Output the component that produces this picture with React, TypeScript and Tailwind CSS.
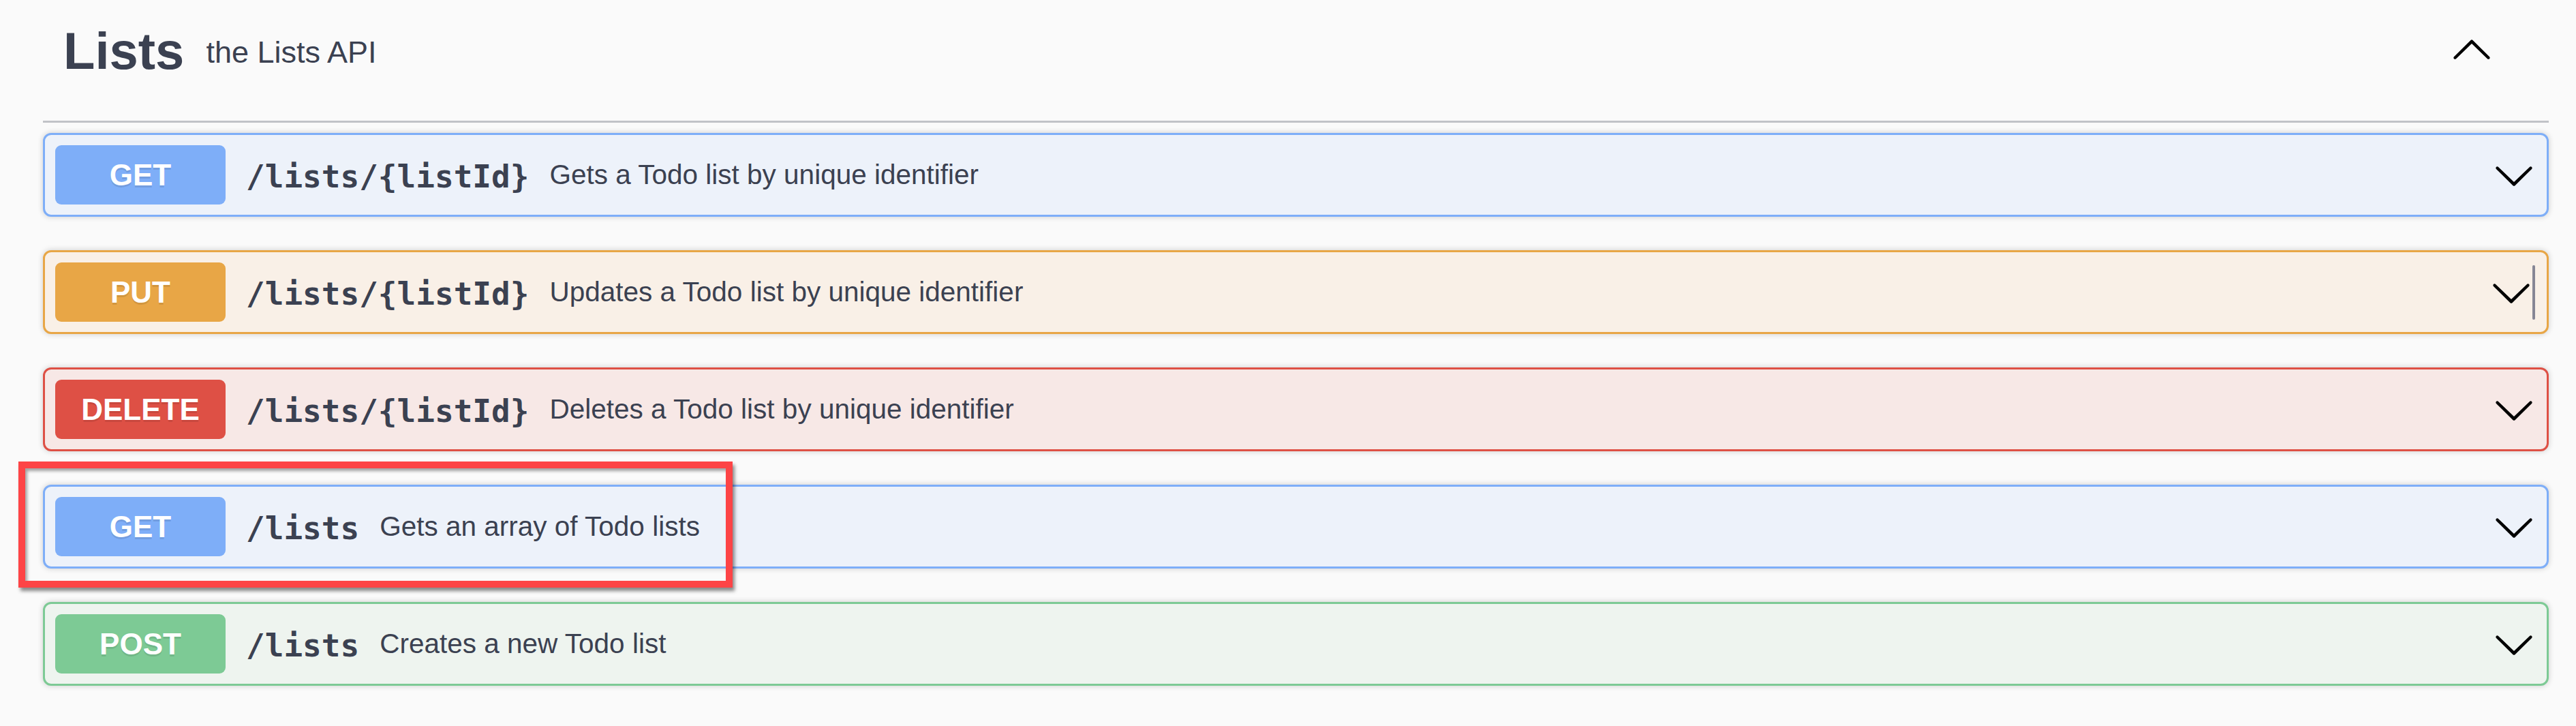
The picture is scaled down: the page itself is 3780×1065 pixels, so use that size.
import React from "react";

type Op = {
  method: string;
  path: string;
  desc: string;
  badge: string;
  bg: string;
  border: string;
  highlight?: boolean;
  cursor?: boolean;
};

const ops: Op[] = [
  { method: "GET", path: "/lists/{listId}", desc: "Gets a Todo list by unique identifier", badge: "bg-[#7eaef8]", bg: "bg-[#edf2fa]", border: "border-[#7eaef8]" },
  { method: "PUT", path: "/lists/{listId}", desc: "Updates a Todo list by unique identifier", badge: "bg-[#e8a646]", bg: "bg-[#f9f0e7]", border: "border-[#e8a646]", cursor: true },
  { method: "DELETE", path: "/lists/{listId}", desc: "Deletes a Todo list by unique identifier", badge: "bg-[#de5045]", bg: "bg-[#f7e8e6]", border: "border-[#de5045]" },
  { method: "GET", path: "/lists", desc: "Gets an array of Todo lists", badge: "bg-[#7eaef8]", bg: "bg-[#edf2fa]", border: "border-[#7eaef8]", highlight: true },
  { method: "POST", path: "/lists", desc: "Creates a new Todo list", badge: "bg-[#7dca95]", bg: "bg-[#eef4ef]", border: "border-[#7dca95]" },
];

function ArrowDown() {
  return (
    <svg width="62" height="62" viewBox="0 0 20 20" className="shrink-0">
      <path
        fill="#000"
        d="M17.418 6.109c.272-.268.709-.268.979 0s.271.701 0 .969l-7.908 7.83c-.27.268-.707.268-.979 0l-7.908-7.83c-.27-.268-.27-.701 0-.969.271-.268.709-.268.979 0L10 13.25l7.418-7.141z"
      />
    </svg>
  );
}

function ArrowUp() {
  return (
    <svg width="62" height="62" viewBox="0 0 20 20" className="shrink-0 mb-[8px]">
      <path
        fill="#000"
        d="M17.418 14.908c.272.268.709.268.979 0s.271-.701 0-.969l-7.908-7.83c-.27-.268-.707-.268-.979 0l-7.908 7.83c-.27.268-.27.701 0 .969.271.268.709.268.979 0L10 7.767l7.418 7.141z"
      />
    </svg>
  );
}

function OpBlock({ op }: { op: Op }) {
  return (
    <div className="relative">
      <div
        className={`flex h-[123px] items-center rounded-[12px] border-[3px] px-[15px] shadow-[0_0_9px_rgba(0,0,0,0.19)] ${op.bg} ${op.border}`}
      >
        <div
          className={`flex h-[87px] w-[250px] shrink-0 items-center justify-center rounded-[9px] font-['Liberation_Sans',Arial,sans-serif] text-[44px] font-bold leading-none text-white [text-shadow:0_3px_0_rgba(0,0,0,0.1)] ${op.badge}`}
        >
          {op.method}
        </div>
        <span className="px-[30px] pt-[4px] font-['DejaVu_Sans_Mono',monospace] text-[46px] font-bold leading-none text-[#3b4151]">
          {op.path}
        </span>
        <span className="font-['Liberation_Sans',Arial,sans-serif] text-[40.5px] leading-none text-[#3b4151]">
          {op.desc}
        </span>
        <div className="ml-auto flex items-center mr-[2px]">
          <ArrowDown />
          {op.cursor && <div className="h-[80px] w-[4px] rounded-full bg-[#868695]" />}
        </div>
      </div>
      {op.highlight && (
        <div className="pointer-events-none absolute left-[-36px] top-[-34px] h-[185px] w-[1048px] border-[10px] border-[#fd4446] shadow-[3px_5px_5px_rgba(0,0,0,0.45),inset_3px_4px_4px_rgba(0,0,0,0.35)]" />
      )}
    </div>
  );
}

export default function App() {
  return (
    <div className="min-h-[1065px] w-full bg-[#fafafa] pl-[63px] pr-[40px]">
      <div className="flex h-[180px] items-center border-b-[3px] border-[#c1c3c7] pb-[27px] pl-[30px]">
        <span className="font-['Liberation_Sans',Arial,sans-serif] text-[76px] font-bold leading-none text-[#3b4151]">
          Lists
        </span>
        <span className="ml-[32px] pt-[3px] font-['Liberation_Sans',Arial,sans-serif] text-[45px] leading-none text-[#3b4151]">
          the Lists API
        </span>
        <div className="ml-auto mr-[82px] flex items-center">
          <ArrowUp />
        </div>
      </div>
      <div className="mt-[15px] flex flex-col gap-[49px]">
        {ops.map((op, i) => (
          <OpBlock key={i} op={op} />
        ))}
      </div>
    </div>
  );
}
